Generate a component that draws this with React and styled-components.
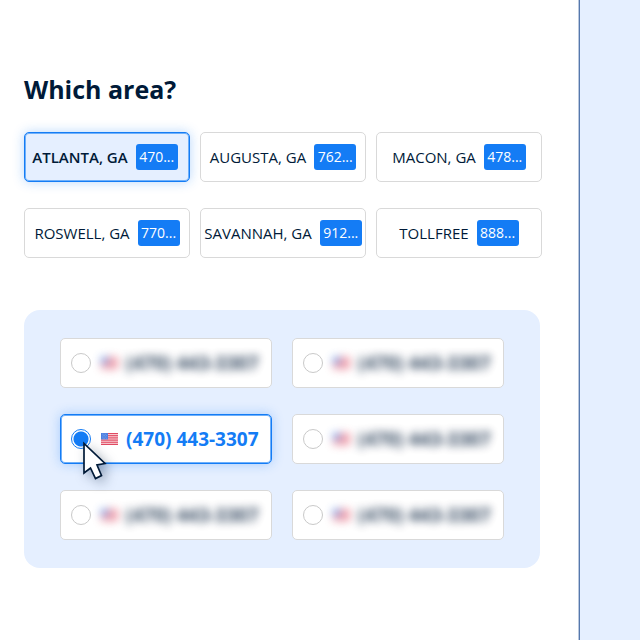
import React, { useState } from 'react';
import styled, { createGlobalStyle, css } from 'styled-components';

const GlobalStyle = createGlobalStyle`
  *, *::before, *::after {
    box-sizing: border-box;
  }

  body {
    margin: 0;
    background: #fff;
    color: #001a38;
    font-family: "Open Sans", "Noto Sans", sans-serif;
  }
`;

const Page = styled.div`
  display: flex;
  min-height: 100vh;
`;

const Content = styled.main`
  flex: 1;
  padding: 72px 36px 72px 24px;
  border-right: 1px solid #bac8de;
`;

const Sidebar = styled.aside`
  width: 61px;
  background: #e5efff;
  border-left: 1px solid #5578ad;
`;

const Title = styled.h1`
  margin: 0 0 26px;
  font-size: 25px;
  font-weight: 700;
  line-height: 34px;
`;

const AreaGrid = styled.div`
  display: grid;
  grid-template-columns: repeat(3, 1fr);
  gap: 26px 10px;
  margin-bottom: 52px;
`;

const activeBox = css`
  border-color: #147cf5;
  box-shadow: inset 0 0 0 1px #6fb0fa, 0 0 12px rgba(20, 124, 245, 0.3);
`;

const AreaButton = styled.button`
  display: flex;
  align-items: center;
  justify-content: center;
  gap: 8px;
  height: 50px;
  padding: 0;
  border: 1px solid #d9d9d9;
  border-radius: 5px;
  background: #fff;
  color: inherit;
  font-family: inherit;
  font-size: 15px;
  white-space: nowrap;
  cursor: pointer;

  ${({ $active }) => $active && css`
    ${activeBox}
    padding-right: 4px;
    background: #e5efff;
    font-weight: 600;
  `}
`;

const AreaCode = styled.span`
  min-width: 42px;
  border-radius: 3px;
  background: #147cf5;
  color: #fff;
  font-size: 14px;
  font-weight: 400;
  line-height: 26px;
  text-align: center;
`;

const NumberPanel = styled.div`
  display: grid;
  grid-template-columns: repeat(2, 1fr);
  gap: 26px 20px;
  margin-right: 2px;
  padding: 28px 36px;
  border-radius: 16px;
  background: #e5efff;
`;

const NumberOption = styled.label`
  position: relative;
  display: flex;
  align-items: center;
  height: 50px;
  padding: 0 10px;
  border: 1px solid #d9d9d9;
  border-radius: 5px;
  background: #fff;
  cursor: pointer;

  ${({ $active }) => $active && activeBox}
`;

const Radio = styled.input`
  appearance: none;
  flex: none;
  width: 20px;
  height: 20px;
  margin: 0 10px 0 0;
  border: 1px solid #c9c9c9;
  border-radius: 50%;
  background: #fff;

  &:checked {
    border-color: #147cf5;
    background: radial-gradient(circle, #147cf5 7px, #fff 8px);
  }
`;

const PhoneNumber = styled.span`
  display: flex;
  align-items: center;
  gap: 8px;
  color: ${({ $active }) => ($active ? '#147cf5' : 'inherit')};
  font-size: 19px;
  font-weight: 700;
  line-height: 26px;
  white-space: nowrap;

  ${({ $active }) => !$active && css`
    opacity: 0.8;
    filter: blur(4px);
  `}
`;

const Pointer = styled.svg`
  position: absolute;
  top: 26px;
  left: 21px;
  z-index: 1;
  overflow: visible;
  filter: drop-shadow(4px 4px 6px rgba(0, 26, 56, 0.35));
  pointer-events: none;
`;

const Flag = () => (
  <svg width="17" height="12" viewBox="0 0 17 12" aria-hidden="true">
    <rect width="17" height="12" fill="#fbdadf" />
    <path
      d="M0 .5h17M0 2.4h17M0 4.2h17M0 6h17M0 7.8h17M0 9.7h17M0 11.5h17"
      stroke="#e04a62"
      strokeWidth="1"
    />
    <rect width="7" height="6.4" fill="#4c7fe0" />
    <path
      d="M1 1.2h5M1.8 2.6h4M1 4h5M1.8 5.3h4"
      stroke="#9dbdf5"
      strokeWidth=".6"
      strokeDasharray=".7 .9"
    />
  </svg>
);

const areas = [
  { name: 'ATLANTA, GA', code: '470...' },
  { name: 'AUGUSTA, GA', code: '762...' },
  { name: 'MACON, GA', code: '478...' },
  { name: 'ROSWELL, GA', code: '770...' },
  { name: 'SAVANNAH, GA', code: '912...' },
  { name: 'TOLLFREE', code: '888...' },
];

const numbers = Array(6).fill('(470) 443-3307');

const App = () => {
  const [area, setArea] = useState('ATLANTA, GA');
  const [selected, setSelected] = useState(2);

  return (
    <>
      <GlobalStyle />
      <Page>
        <Content>
          <Title>Which area?</Title>
          <AreaGrid>
            {areas.map(({ name, code }) => (
              <AreaButton
                key={name}
                type="button"
                $active={name === area}
                aria-pressed={name === area}
                onClick={() => setArea(name)}
              >
                {name}
                <AreaCode>{code}</AreaCode>
              </AreaButton>
            ))}
          </AreaGrid>
          <NumberPanel>
            {numbers.map((number, i) => (
              <NumberOption key={i} htmlFor={`number-${i}`} $active={i === selected}>
                <Radio
                  id={`number-${i}`}
                  type="radio"
                  name="number"
                  checked={i === selected}
                  onChange={() => setSelected(i)}
                />
                <PhoneNumber $active={i === selected}>
                  <Flag />
                  {number}
                </PhoneNumber>
                {i === selected && (
                  <Pointer width="26" height="38" viewBox="0 0 26 38" aria-hidden="true">
                    <path
                      d="M2 2.500v29.500l6.500-5 5 10.500 6-3-4.500-10.500 8-1.500z"
                      fill="#fff"
                      stroke="#001a38"
                      strokeWidth="1.700"
                    />
                  </Pointer>
                )}
              </NumberOption>
            ))}
          </NumberPanel>
        </Content>
        <Sidebar />
      </Page>
    </>
  );
};

export default App;
